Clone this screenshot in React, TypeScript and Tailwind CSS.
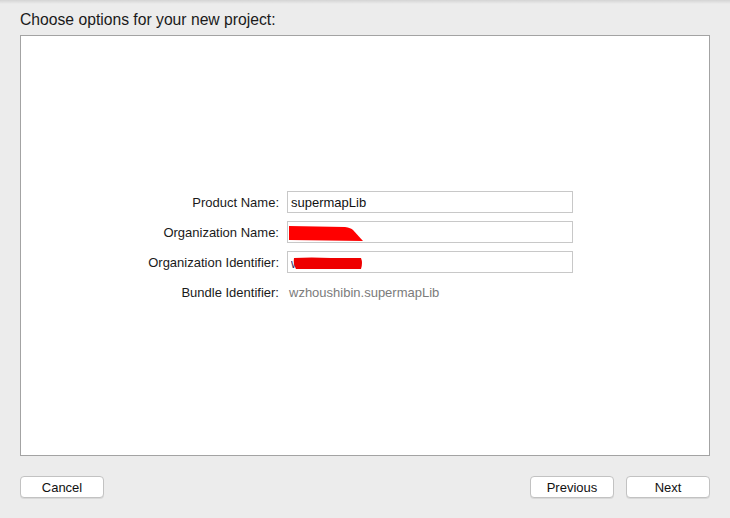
import React from 'react';

const Field: React.FC<{ label: string; children: React.ReactNode }> = ({ label, children }) => (
  <div className="flex items-center h-[22px]">
    <div className="w-[266px] pr-[8px] pt-[2px] text-right text-[13px] text-[#1a1a1a]">{label}</div>
    {children}
  </div>
);

const Input: React.FC<{ children?: React.ReactNode }> = ({ children }) => (
  <div className="relative w-[286px] h-[22px] bg-white border border-[#c8c8c8] flex items-center px-[3px] pt-[1px] text-[13px] text-[#111]">
    {children}
  </div>
);

const Button: React.FC<{ label: string }> = ({ label }) => (
  <button className="w-[84px] h-[22px] bg-white border border-[#c2c2c2] rounded-[4px] shadow-[0_1px_0_rgba(0,0,0,0.08)] text-[13px] text-[#111] leading-none">
    {label}
  </button>
);

export default function App() {
  return (
    <div
      className="w-[730px] h-[518px] bg-[#ececec] flex flex-col relative"
      style={{ fontFamily: '"Liberation Sans", Arial, sans-serif' }}
    >
      <div className="absolute top-0 left-0 right-0 h-[4px] bg-gradient-to-b from-[#d4d4d4] to-[#ececec]" />
      <div className="pl-[20px] pt-[8px] h-[35px] text-[15.7px] text-[#1a1a1a]">Choose options for your new project:</div>
      <div className="mx-[20px] h-[421px] bg-white border border-[#a3a3a3] flex flex-col">
        <div className="mt-[155px] flex flex-col gap-[8px]">
          <Field label="Product Name:">
            <Input>supermapLib</Input>
          </Field>
          <Field label="Organization Name:">
            <Input>
              <svg className="absolute left-[1px] top-[4px]" width="76" height="16" viewBox="0 0 76 16">
                <path d="M0 0 L56 1 Q62 2 64 4 L74 15 L0 14 Z" fill="#ff0000" />
              </svg>
            </Input>
          </Field>
          <Field label="Organization Identifier:">
            <Input>
              <svg className="absolute left-[3px] top-[4px]" width="74" height="14" viewBox="0 0 74 14">
                <text x="0" y="12" fontSize="12" fill="#2a2a6a" fontFamily="Liberation Sans, Arial, sans-serif">w</text>
                <path d="M3 2 Q20 1 40 2 L70 2 Q72 7 70 13 L5 13 Q2 8 3 2 Z" fill="#ee0000" />
              </svg>
            </Input>
          </Field>
          <Field label="Bundle Identifier:">
            <div className="pl-[2px] pt-[2px] text-[13px] text-[#7b7b7b]">wzhoushibin.supermapLib</div>
          </Field>
        </div>
      </div>
      <div className="flex items-center mx-[20px] mt-[20px]">
        <Button label="Cancel" />
        <div className="flex-1" />
        <div className="flex gap-[12px]">
          <Button label="Previous" />
          <Button label="Next" />
        </div>
      </div>
    </div>
  );
}
